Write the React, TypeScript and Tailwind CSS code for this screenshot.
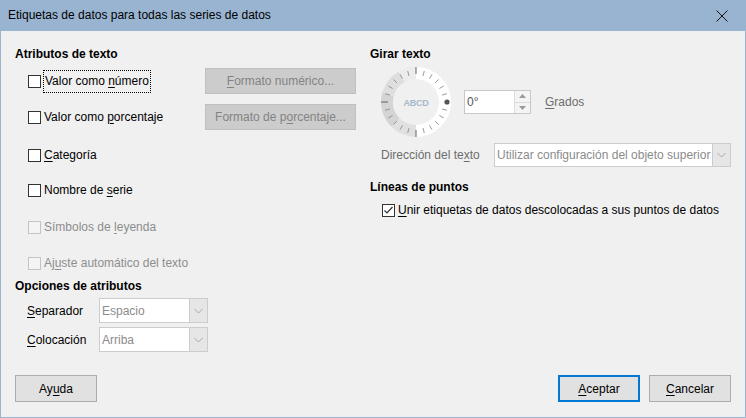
import type { ReactNode } from "react";

// Windows-style dialog: "Etiquetas de datos para todas las series de datos"

const FONT = { fontFamily: '"Liberation Sans", Arial, sans-serif' };

function CheckBox({ checked, disabled }: { checked?: boolean; disabled?: boolean }) {
  return (
    <span
      className={
        disabled
          ? "flex h-[13px] w-[13px] shrink-0 items-center justify-center border border-[#c4c4c4] bg-[#f4f4f4]"
          : "flex h-[13px] w-[13px] shrink-0 items-center justify-center border border-[#333333] bg-white"
      }
    >
      {checked && (
        <svg width="11" height="11" viewBox="0 0 11 11">
          <polyline points="1.5,5.5 4,8 9.5,2" fill="none" stroke="#333" strokeWidth="1.2" />
        </svg>
      )}
    </span>
  );
}

function CheckRow({
  children,
  checked,
  disabled,
  focused,
}: {
  children: ReactNode;
  checked?: boolean;
  disabled?: boolean;
  focused?: boolean;
}) {
  return (
    <div className="flex items-center">
      <CheckBox checked={checked} disabled={disabled} />
      <span
        className={
          focused
            ? "ml-[2px] border border-dotted border-black px-px py-[3px] leading-[15px]"
            : "ml-[3px] py-[4px] leading-[15px]"
        }
        style={{ color: disabled ? "#8d8d8d" : "#000" }}
      >
        {children}
      </span>
    </div>
  );
}

function Combo({ value, width }: { value: string; width: string }) {
  return (
    <div className={`flex h-full items-stretch border border-[#cccccc] bg-white ${width}`}>
      <span className="flex flex-1 items-center truncate pl-[2px] text-[#8b8b8b]">{value}</span>
      <span className="flex w-[18px] items-center justify-center border-l border-[#cccccc] bg-[#e6e6e6]">
        <svg width="9" height="6" viewBox="0 0 9 6">
          <polyline points="0.5,1 4.5,5 8.5,1" fill="none" stroke="#a8a8a8" strokeWidth="1" />
        </svg>
      </span>
    </div>
  );
}

function Dial() {
  const ticks = [];
  for (let a = 0; a < 360; a += 15) {
    const rad = (a * Math.PI) / 180;
    const major = a % 90 === 0;
    const r1 = major ? 28 : 27;
    const r2 = major ? 35 : 32;
    if (a === 0) continue;
    ticks.push(
      <line
        key={a}
        x1={36 + r1 * Math.cos(rad)}
        y1={36 - r1 * Math.sin(rad)}
        x2={36 + r2 * Math.cos(rad)}
        y2={36 - r2 * Math.sin(rad)}
        stroke={major ? "#555" : "#8c8c8c"}
        strokeWidth="0.9"
      />
    );
  }
  const arc = (from: number, to: number) => {
    const r = 29;
    const p = (d: number) => {
      const rad = (d * Math.PI) / 180;
      return `${36 + r * Math.cos(rad)} ${36 - r * Math.sin(rad)}`;
    };
    return `M ${p(from)} A ${r} ${r} 0 0 0 ${p(to)}`;
  };
  return (
    <svg width="72" height="72" viewBox="0 0 72 72" className="shrink-0">
      <path d={arc(-90, 90)} stroke="#ffffff" strokeWidth="12" fill="none" />
      <path d={arc(90, 120)} stroke="#ececec" strokeWidth="12" fill="none" />
      <path d={arc(120, 165)} stroke="#dedede" strokeWidth="12" fill="none" />
      <path d={arc(165, 225)} stroke="#d4d4d4" strokeWidth="12" fill="none" />
      <path d={arc(225, 270)} stroke="#e0e0e0" strokeWidth="12" fill="none" />
      {ticks}
      <circle cx="67" cy="36" r="2.6" fill="#555" />
      <text
        x="36"
        y="39.5"
        textAnchor="middle"
        fontSize="9"
        fontWeight="bold"
        letterSpacing="-0.3"
        fontFamily="Liberation Sans, Arial, sans-serif"
        fill="#a6b8cc"
      >
        ABCD
      </text>
    </svg>
  );
}

function DisabledButton({ children }: { children: ReactNode }) {
  return (
    <div className="flex h-[26px] w-[151px] items-center justify-center border border-[#bfbfbf] bg-[#cccccc] text-[#838383]">
      {children}
    </div>
  );
}

function Button({ children, primary }: { children: ReactNode; primary?: boolean }) {
  return (
    <div
      className={
        primary
          ? "flex h-[27px] w-[82px] items-center justify-center border-2 border-[#0078d7] bg-[#e1e1e1]"
          : "flex h-[27px] w-[82px] items-center justify-center border border-[#adadad] bg-[#e1e1e1]"
      }
    >
      {children}
    </div>
  );
}

export default function App() {
  return (
    <div
      className="flex h-[418px] w-[746px] flex-col border-x border-b border-[#99b4d1] bg-[#f0f0f0] text-[12px] text-black"
      style={FONT}
    >
      {/* Title bar */}
      <div className="flex h-[31px] shrink-0 items-center justify-between bg-[#99b4d1] pl-[7px] pr-[17px]">
        <span className="pb-px">Etiquetas de datos para todas las series de datos</span>
        <svg width="12" height="12" viewBox="0 0 12 12">
          <path d="M0.5 0.5 L11.5 11.5 M11.5 0.5 L0.5 11.5" stroke="#111" strokeWidth="1" />
        </svg>
      </div>

      <div className="flex flex-1 flex-col">
        <div className="flex">
          {/* Left column */}
          <div className="flex w-[369px] shrink-0 flex-col pl-[14px] pt-[15px]">
            <div className="h-[16px] font-bold leading-[16px]">Atributos de texto</div>

            <div className="mt-[6px] flex h-[26px] items-center">
              <div className="w-[190px] pl-[13px]">
                <CheckRow focused>
                  Valor como <u className="underline-offset-2">n</u>úmero
                </CheckRow>
              </div>
              <DisabledButton>
                <u className="underline-offset-2">F</u>ormato numérico...
              </DisabledButton>
            </div>

            <div className="mt-[10px] flex h-[26px] items-center">
              <div className="w-[190px] pl-[13px]">
                <CheckRow>
                  Valor como <u className="underline-offset-2">p</u>orcentaje
                </CheckRow>
              </div>
              <DisabledButton>
                Formato de p<u className="underline-offset-2">o</u>rcentaje...
              </DisabledButton>
            </div>

            <div className="mt-[12px] flex h-[26px] items-center pl-[13px]">
              <CheckRow>
                <u className="underline-offset-2">C</u>ategoría
              </CheckRow>
            </div>

            <div className="mt-[9px] flex h-[26px] items-center pl-[13px]">
              <CheckRow>
                Nombre de <u className="underline-offset-2">s</u>erie
              </CheckRow>
            </div>

            <div className="mt-[11px] flex h-[26px] items-center pl-[13px]">
              <CheckRow disabled>
                Símbolos de <u className="underline-offset-2">l</u>eyenda
              </CheckRow>
            </div>

            <div className="mt-[10px] flex h-[26px] items-center pl-[13px]">
              <CheckRow disabled>
                Aj<u className="underline-offset-2">u</u>ste automático del texto
              </CheckRow>
            </div>

            <div className="mt-[2px] h-[16px] font-bold leading-[16px]">Opciones de atributos</div>

            <div className="mt-[4px] flex h-[25px] items-center pl-[12px]">
              <span className="w-[72px]">
                <u className="underline-offset-2">S</u>eparador
              </span>
              <Combo value="Espacio" width="w-[109px]" />
            </div>

            <div className="mt-[4px] flex h-[25px] items-center pl-[12px]">
              <span className="w-[72px]">
                <u className="underline-offset-2">C</u>olocación
              </span>
              <Combo value="Arriba" width="w-[109px]" />
            </div>
          </div>

          {/* Right column */}
          <div className="flex flex-1 flex-col pt-[15px]">
            <div className="h-[16px] font-bold leading-[16px]">Girar texto</div>

            <div className="mt-[4px] flex items-center pl-[10px]">
              <Dial />
              <div className="ml-[12px] flex h-[24px] w-[67px] border border-[#c8c8c8] bg-white">
                <span className="flex flex-1 items-center pl-[2px] text-[#555]">0°</span>
                <div className="flex w-[16px] flex-col border-l border-[#dcdcdc] bg-[#f4f4f4]">
                  <span className="flex flex-1 items-center justify-center border-b border-[#dcdcdc]">
                    <svg width="7" height="4" viewBox="0 0 7 4">
                      <polygon points="0,4 3.5,0 7,4" fill="#9a9a9a" />
                    </svg>
                  </span>
                  <span className="flex flex-1 items-center justify-center">
                    <svg width="7" height="4" viewBox="0 0 7 4">
                      <polygon points="0,0 3.5,4 7,0" fill="#9a9a9a" />
                    </svg>
                  </span>
                </div>
              </div>
              <span className="ml-[14px] text-[#6d6d6d]">
                <u className="underline-offset-2">G</u>rados
              </span>
            </div>

            <div className="mt-[5px] flex h-[24px] items-center pl-[11px]">
              <span className="w-[113px] text-[#6d6d6d]">
                Dirección del te<u className="underline-offset-2">x</u>to
              </span>
              <Combo value="Utilizar configuración del objeto superior" width="w-[237px]" />
            </div>

            <div className="mt-[12px] h-[16px] font-bold leading-[16px]">Líneas de puntos</div>

            <div className="mt-[7px] flex h-[16px] items-center pl-[12px]">
              <CheckRow checked>
                <u className="underline-offset-2">U</u>nir etiquetas de datos descolocadas a sus puntos de datos
              </CheckRow>
            </div>
          </div>
        </div>

        {/* Footer buttons */}
        <div className="mt-auto flex items-center justify-between px-[14px] pb-[15px]">
          <Button>
            Ay<u className="underline-offset-2">u</u>da
          </Button>
          <div className="flex gap-[9px]">
            <Button primary>
              <u className="underline-offset-2">A</u>ceptar
            </Button>
            <Button>
              <u className="underline-offset-2">C</u>ancelar
            </Button>
          </div>
        </div>
      </div>
    </div>
  );
}
